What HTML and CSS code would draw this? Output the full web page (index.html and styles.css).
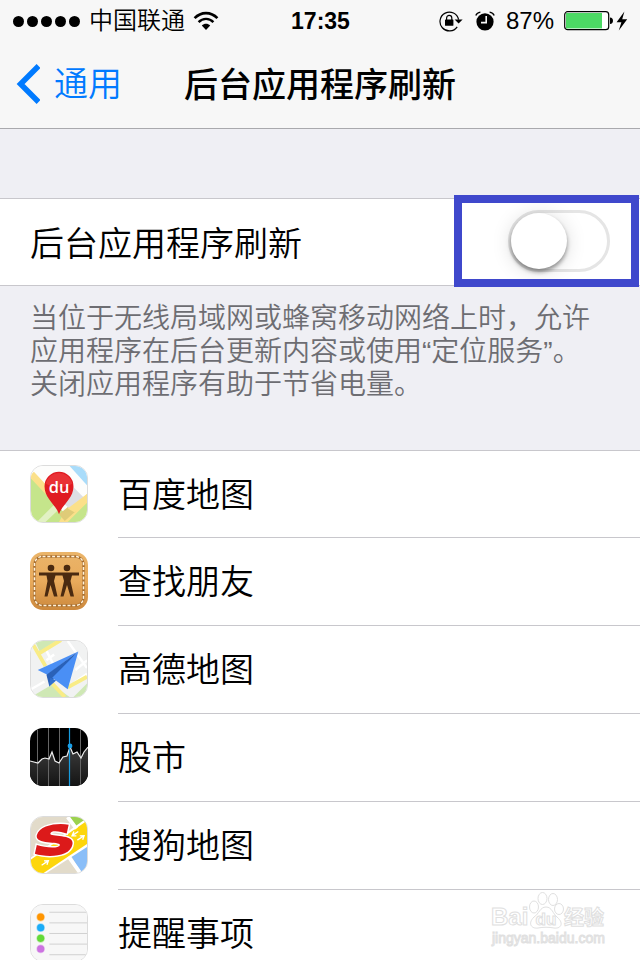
FILE: index.html
```
<!DOCTYPE html>
<html lang="zh-CN">
<head>
    <meta charset="UTF-8">
    <meta name="viewport" content="width=device-width, initial-scale=1.0">
    <title>后台应用程序刷新</title>
    <link rel="stylesheet" href="styles.css">
</head>
<body>
<div class="screen">

    <header class="header">
        <div class="status">
            <div class="status-left">
                <div class="signal"><i></i><i></i><i></i><i></i><i></i></div>
                <span>中国联通</span>
                <svg class="wifi" width="26" height="20" viewBox="0 0 26 20" fill="none" stroke="#000">
                    <path d="M1.6 7.2C8 0.4 18 0.4 24.4 7.2" stroke-width="2.6"/>
                    <path d="M5.6 11.2C9.8 6.8 16.2 6.8 20.4 11.2" stroke-width="2.4"/>
                    <path d="M13 19L8.8 14.6C11.2 12.2 14.8 12.2 17.2 14.6Z" fill="#000" stroke="none"/>
                </svg>
            </div>
            <div class="time">17:35</div>
            <div class="status-right">
                <svg width="24" height="22" viewBox="0 0 24 22">
                    <path d="M18.2 16.8A9.4 9.4 0 1 1 19.6 9.6" fill="none" stroke="#000" stroke-width="1.2"/>
                    <path d="M15.6 9.6H23.6L19.6 13.6Z"/>
                    <rect x="6" y="9.4" width="8.4" height="6.4" rx="0.6"/>
                    <path d="M7.6 10V8A2.6 2.6 0 0 1 12.8 8V10" fill="none" stroke="#000" stroke-width="1.2"/>
                </svg>
                <svg class="alarm" width="20" height="20" viewBox="0 0 20 20">
                    <circle cx="10" cy="10.8" r="8.6"/>
                    <path d="M0.8 4.6Q2 1.6 5.4 1.2M19.2 4.6Q18 1.6 14.6 1.2" fill="none" stroke="#000" stroke-width="1.3"/>
                    <path d="M11.2 5V11.6H6" fill="none" stroke="#f7f7f7" stroke-width="1.6"/>
                </svg>
                <span>87%</span>
                <svg class="battery" width="50" height="20" viewBox="0 0 50 20">
                    <rect x="1.7" y="0.7" width="44" height="18" rx="3" fill="#fff" stroke="#000" stroke-width="1.2"/>
                    <rect x="3" y="2" width="36" height="15.4" fill="#4cd964"/>
                    <path d="M47 6.4Q50 6.6 50 9.7T47 13Z"/>
                </svg>
                <svg width="12" height="20" viewBox="0 0 12 20">
                    <path d="M8.4 0.6L0.6 11.2H5.4L2.8 19.4L11.2 8.2H6.2Z"/>
                </svg>
            </div>
        </div>
        <nav class="nav">
            <button type="button" class="back">
                <svg width="24" height="40" viewBox="0 0 24 40" fill="none" stroke="#007aff" stroke-width="5.6">
                    <path d="M22.6 2L4.6 20L22.6 38"/>
                </svg>
                <span>通用</span>
            </button>
            <h1 class="title">后台应用程序刷新</h1>
        </nav>
    </header>

    <main>
        <div class="setting">
            <label for="refresh">后台应用程序刷新</label>
            <input type="checkbox" id="refresh" class="switch">
            <div class="highlight"></div>
        </div>
        <p class="note">当位于无线局域网或蜂窝移动网络上时，允许应用程序在后台更新内容或使用“定位服务”。关闭应用程序有助于节省电量。</p>

        <ul class="apps">
            <li class="app">
                <svg class="icon light" viewBox="0 0 58 58">
                    <rect width="58" height="58" fill="#fdfdfc"/>
                    <path d="M0 12L34 48L44 42L58 34V58H0Z" fill="#c5e58b"/>
                    <path d="M3 6L20 24L16 30L0 13V9Z" fill="#fbe08a"/>
                    <path d="M6 58L28 36L33 41L15 58Z" fill="#e2f1c4"/>
                    <path d="M58 29V38L38 58H29L34 49Z" fill="#fbe08a"/>
                    <path d="M40 41L46 47L35 57L29 50Z" fill="#dfcb78"/>
                    <path d="M40 0H58V20Z" fill="#a9dcfa"/>
                    <path d="M42 20L58 36L41 45L33 38Z" fill="#dddee4"/>
                    <path d="M58 29V38L45 48L38 44Z" fill="#fbe08a"/>
                    <path d="M29 50C26 40 14 34 14 21A15 15 0 0 1 44 21C44 34 32 40 29 50Z" fill="#e01b22"/>
                    <path d="M15 18A14.5 14.5 0 0 1 43 18Q29 26 15 18Z" fill="#e93236"/>
                    <text class="du" x="29" y="28" text-anchor="middle">du</text>
                </svg>
                <span>百度地图</span>
            </li>
            <li class="app">
                <svg class="icon" viewBox="0 0 58 58">
                    <defs>
                        <linearGradient id="leather" x1="0" y1="0" x2="0" y2="1">
                            <stop offset="0" stop-color="#eab469"/>
                            <stop offset="0.5" stop-color="#e9ab5c"/>
                            <stop offset="1" stop-color="#cc883c"/>
                        </linearGradient>
                    </defs>
                    <rect width="58" height="58" fill="url(#leather)"/>
                    <rect x="4.5" y="4.5" width="49" height="49" rx="8" fill="none" stroke="#a76d2e" stroke-width="2.4"/>
                    <rect x="4.5" y="4.5" width="49" height="49" rx="8" fill="none" stroke="#fff3dc" stroke-width="1.5" stroke-dasharray="3 1.8"/>
                    <g fill="#4a2a10">
                        <circle cx="21" cy="16" r="3.3"/>
                        <circle cx="37" cy="16" r="3.3"/>
                        <path d="M9 20.5H49V23.5H42L40.5 29L44 44.5H40.5L37 33L33.5 44.5H30.5L34 29L32.5 23.5H25.5L24 29L27.5 44.5H24L20.5 33L17.5 44.5H14.5L17.5 29L16.5 23.5H9Z"/>
                    </g>
                </svg>
                <span>查找朋友</span>
            </li>
            <li class="app">
                <svg class="icon light" viewBox="0 0 58 58">
                    <rect width="58" height="58" fill="#f1f2f2"/>
                    <path d="M4 0H26L9 11Z" fill="#cfe8b5"/>
                    <path d="M0 58L22 45L40 58Z" fill="#cfe8b5"/>
                    <path d="M44 58L58 44V58Z" fill="#cfe8b5"/>
                    <g fill="none" stroke="#fff" stroke-width="2.5">
                        <path d="M16 10L24 26M16 20L24 14M38 0L58 28M0 50L14 42M46 30L58 20M44 44L58 34"/>
                    </g>
                    <g fill="none" stroke="#f9ec86" stroke-width="4">
                        <path d="M0 0L15 26M8 13L31 -1M22 44L35 58M38 48L58 37"/>
                    </g>
                    <path d="M49 11L7 30L17 35Z" fill="#4a8ff5"/>
                    <path d="M49 11L16 35L19 47L23 40Z" fill="#2a61b8"/>
                    <path d="M49 11L22 38L38 50Z" fill="#4a8ff5"/>
                    <path d="M19 47L20 38L26 41Z" fill="#3170cf"/>
                </svg>
                <span>高德地图</span>
            </li>
            <li class="app">
                <svg class="icon" viewBox="0 0 58 58">
                    <defs>
                        <linearGradient id="chart" x1="0" y1="0" x2="0" y2="1">
                            <stop offset="0" stop-color="#3c3c3c"/>
                            <stop offset="1" stop-color="#141414"/>
                        </linearGradient>
                    </defs>
                    <rect width="58" height="58" fill="#000"/>
                    <path d="M0 33L8 35L12 31L15 30L19 31L22 24L25 33L29 35L33 29L37 28L40 19L43 26L47 24L51 30L54 24L58 19V58H0Z" fill="url(#chart)"/>
                    <path d="M7.5 0V58M18.5 0V58M29.5 0V58M50.5 0V58" stroke="#666" stroke-width="1"/>
                    <path d="M0 33L8 35L12 31L15 30L19 31L22 24L25 33L29 35L33 29L37 28L40 19L43 26L47 24L51 30L54 24L58 19" fill="none" stroke="#eee" stroke-width="1.2"/>
                    <path d="M39.5 0V58" stroke="#189cde" stroke-width="1.2"/>
                    <circle cx="40" cy="18" r="2.4" fill="#189fe8"/>
                </svg>
                <span>股市</span>
            </li>
            <li class="app">
                <svg class="icon light" viewBox="0 0 58 58">
                    <rect width="58" height="58" fill="#e2dbca"/>
                    <path d="M40 0H58V10L48 12Z" fill="#9cd24f"/>
                    <path d="M42 41L58 30V58H52Z" fill="#8abef8"/>
                    <path d="M0 42L58 1V31L16 58H0Z" fill="#fff"/>
                    <path d="M0 44L58 4V28L13 58H0Z" fill="#fdd60c"/>
                    <path d="M38 0L47 12M39 41L51 58" stroke="#fff" stroke-width="4"/>
                    <path class="sogou-s" d="M39 8C28 6 9 8 6 19C4 29 30 25 30 29C29 33 15 32 6 29L4 38C16 42 41 42 43 28C45 17 19 21 20 17C21 13 31 15 37 17Z"/>
                    <path d="M11 50L17 46M13.5 45.5L18 45.3L16.5 49.5M48 24L54 20M50.5 19.5L55 19.3L53.5 23.5M49 15L43 19M44.5 15L42.5 19.5L47 19.5" fill="none" stroke="#fff" stroke-width="1.4"/>
                </svg>
                <span>搜狗地图</span>
            </li>
            <li class="app">
                <svg class="icon light" viewBox="0 0 58 58">
                    <rect width="58" height="58" fill="#f7f7f7"/>
                    <path d="M19 7.5H58M19 18.5H58M19 29.5H58M19 40.5H58M19 51.5H58" stroke="#cfcfcf" stroke-width="1"/>
                    <g stroke-width="1.6" stroke-opacity="0.4">
                        <circle cx="10" cy="12.5" r="3.7" fill="#ff9500" stroke="#ff9500"/>
                        <circle cx="10" cy="23.5" r="3.7" fill="#1badf8" stroke="#1badf8"/>
                        <circle cx="10" cy="34.5" r="3.7" fill="#63da38" stroke="#63da38"/>
                        <circle cx="10" cy="45.5" r="3.7" fill="#cc73e1" stroke="#cc73e1"/>
                    </g>
                </svg>
                <span>提醒事项</span>
            </li>
        </ul>
    </main>

    <svg class="watermark" width="120" height="58" viewBox="0 0 120 58">
        <g fill="#fff" stroke="#e0e0e0" stroke-width="1">
            <text class="wm-big" x="1" y="35">Bai</text>
            <text class="wm-cjk" x="74" y="35">经验</text>
            <ellipse cx="44" cy="17" rx="4.5" ry="6"/>
            <ellipse cx="52.5" cy="8.5" rx="4.5" ry="6"/>
            <ellipse cx="63" cy="9.5" rx="4.5" ry="6"/>
            <ellipse cx="69" cy="19" rx="4.5" ry="5.5"/>
            <path d="M56 17C62 17 63 24 67 27C75 34 70 39 64 38C59 37 53 37 48 38C42 39 37 34 44 27C49 24 50 17 56 17Z"/>
            <text class="wm-du" x="56" y="35" text-anchor="middle">du</text>
            <text class="wm-url" x="2" y="53">jingyan.baidu.com</text>
        </g>
    </svg>
</div>
</body>
</html>
```
FILE: styles.css
```
* {
    box-sizing: border-box;
}
body {
    margin: 0;
    background: #efeff4;
    color: #000;
    font-family: "Liberation Sans", "Noto Sans CJK SC", sans-serif;
    font-weight: 350;
}
.screen {
    position: relative;
    height: 100vh;
    overflow: hidden;
}
svg {
    display: block;
    flex-shrink: 0;
}

/* header */
.header {
    background: #f7f7f7;
    border-bottom: 1px solid #a9a9ad;
}
.status {
    display: grid;
    grid-template-columns: 1fr auto 1fr;
    align-items: center;
    height: 40px;
    padding: 0 12px 0 13px;
    font-size: 24px;
    line-height: 42px;
}
.status-left, .status-right {
    display: flex;
    align-items: center;
}
.status-right {
    justify-content: flex-end;
}
.signal {
    display: flex;
    gap: 3px;
    margin-right: 9px;
}
.signal i {
    width: 11px;
    height: 11px;
    border-radius: 50%;
    background: #000;
}
.wifi {
    margin-left: 8px;
}
.time {
    font-size: 23px;
    font-weight: bold;
}
.alarm {
    margin: 0 11px 0 12px;
}
.battery {
    margin: 0 3px 0 9px;
}
.nav {
    display: grid;
    grid-template-columns: 1fr auto 1fr;
    align-items: center;
    height: 88px;
    padding: 0 16px;
}
.back {
    display: flex;
    align-items: center;
    justify-self: start;
    gap: 14px;
    padding: 0;
    border: none;
    background: none;
    color: #007aff;
    font: inherit;
    font-size: 34px;
    line-height: 52px;
}
.title {
    margin: 0;
    padding-top: 2px;
    font-size: 34px;
    font-weight: 500;
    line-height: 48px;
}

/* switch row */
.setting {
    position: relative;
    display: flex;
    align-items: center;
    justify-content: space-between;
    height: 88px;
    margin-top: 69px;
    padding: 0 30px 2px;
    background: #fff;
    border-top: 1px solid #c8c7cc;
    border-bottom: 1px solid #c8c7cc;
    font-size: 34px;
}
.switch {
    appearance: none;
    width: 102px;
    height: 62px;
    margin: 0;
    border: 3px solid #e5e5e5;
    border-radius: 31px;
    background: #fff;
}
.switch::before {
    content: "";
    display: block;
    width: 56px;
    height: 56px;
    border-radius: 50%;
    background: #fff;
    box-shadow: 0 3px 4px rgba(0, 0, 0, 0.4), 0 2px 20px rgba(0, 0, 0, 0.15);
}
.switch:checked {
    background: #4cd964;
    border-color: #4cd964;
}
.switch:checked::before {
    margin-left: auto;
}
.highlight {
    position: absolute;
    top: -4px;
    right: 1px;
    width: 185px;
    height: 92px;
    border: 8px solid #3f48cc;
    pointer-events: none;
}
.note {
    margin: 0;
    padding: 16px 40px 49px 30px;
    color: #6d6d72;
    font-size: 28px;
    line-height: 33px;
}

/* app list */
.apps {
    margin: 0;
    padding: 0;
    list-style: none;
    background: #fff;
    border-top: 1px solid #c8c7cc;
}
.app {
    display: flex;
    align-items: center;
    gap: 30px;
    height: 88px;
    padding-left: 30px;
    font-size: 34px;
}
.app:first-child {
    height: 87px;
}
.app span {
    flex: 1;
    align-self: stretch;
    line-height: 88px;
    border-bottom: 1px solid #c8c7cc;
}
.icon {
    width: 58px;
    height: 58px;
    margin-bottom: 2px;
    border-radius: 13px;
}
.light {
    border: 1px solid #dcdcdc;
}
.du {
    fill: #fff;
    font-family: "Open Sans", sans-serif;
    font-size: 17px;
    font-weight: 600;
}
.sogou-s {
    fill: #dc1a1a;
    stroke: #fff;
    stroke-width: 3px;
    paint-order: stroke;
}

/* watermark */
.watermark {
    position: absolute;
    right: 30px;
    bottom: 12px;
}
.wm-big {
    font-size: 24px;
    font-weight: bold;
}
.wm-cjk {
    font-size: 20px;
    font-weight: bold;
}
.wm-du {
    font-size: 17px;
    font-weight: bold;
}
.wm-url {
    font-size: 14px;
}
```
